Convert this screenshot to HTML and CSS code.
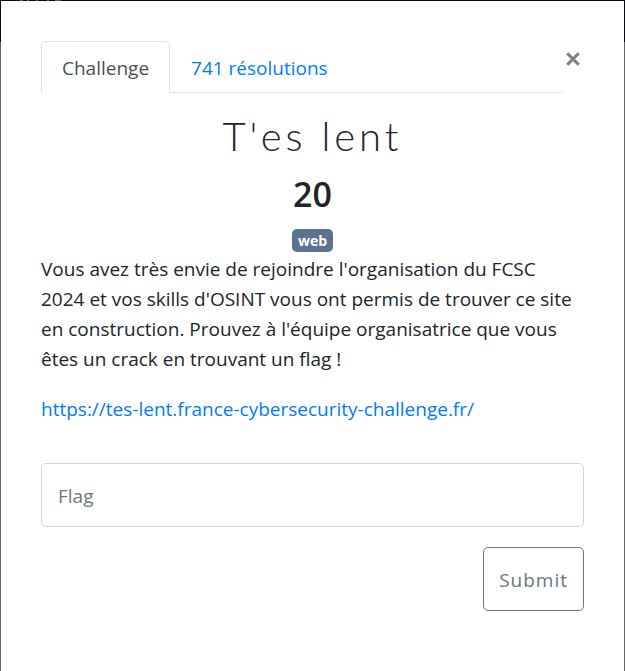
FILE: index.html
```html
<!DOCTYPE html>
<html lang="fr">
<head>
<meta charset="utf-8">
<meta name="viewport" content="width=device-width, initial-scale=1">
<title>T'es lent</title>
<link rel="stylesheet" href="styles.css">
</head>
<body>
<main class="modal">
  <header class="modal-top">
    <nav class="tabs">
      <a class="tab active" href="#challenge">Challenge</a>
      <a class="tab" href="#solves">741 résolutions</a>
    </nav>
    <button class="close" type="button" aria-label="Fermer">
      <svg viewBox="0 0 14 14" width="14" height="14" aria-hidden="true"><path d="M1.2 1.2 12.8 12.8M12.8 1.2 1.2 12.8"/></svg>
    </button>
  </header>
  <section id="challenge">
    <h2 class="name">T'es lent</h2>
    <h3 class="value">20</h3>
    <div class="tags"><span class="badge">web</span></div>
    <p>Vous avez très envie de rejoindre l'organisation du FCSC 2024 et vos skills d'OSINT vous ont permis de trouver ce site en construction. Prouvez à l'équipe organisatrice que vous êtes un crack en trouvant un flag !</p>
    <p><a class="link" href="#site">https://tes-lent.france-cybersecurity-challenge.fr/</a></p>
    <form class="answer">
      <input class="flag" type="text" placeholder="Flag" aria-label="Flag">
      <button class="submit" type="button">Submit</button>
    </form>
  </section>
</main>
</body>
</html>
```
FILE: styles.css
```css
* {
  box-sizing: border-box;
}

body {
  margin: 0;
  min-height: 100vh;
  padding: 1px 1px 0;
  display: flex;
  background:
    linear-gradient(90deg, transparent 20px, #666 20px 23px, transparent 23px 27px, #666 27px 29px, transparent 29px 36px, #666 36px 38px, transparent 38px 47px, #666 47px 49px, transparent 49px 55px, #555 55px 61px, transparent 61px) 0 0 / 100% 1px no-repeat,
    linear-gradient(#050816 42px, #666 42px);
  color: #212529;
  font: 19px/30px "Open Sans", "Noto Sans", sans-serif;
}

.modal {
  flex: 1;
  min-width: 0;
  padding: 40px;
  background: #fff;
}

.modal-top {
  display: flex;
  align-items: flex-start;
}

.tabs {
  flex: 1;
  display: flex;
  border-bottom: 1px solid #dee2e6;
}

.tab {
  margin-bottom: -1px;
  padding: 11px 20px 9px;
  border: 1px solid transparent;
  border-radius: 5px 5px 0 0;
  color: #007bff;
  text-decoration: none;
}

.tab.active {
  border-color: #dee2e6 #dee2e6 #fff;
  background: #fff;
  color: #495057;
}

.close {
  padding: 11px 4px 11px 3px;
  border: 0;
  background: none;
  line-height: 0;
}

.close path {
  fill: none;
  stroke: #7f7f7f;
  stroke-width: 3;
}

.name,
.value {
  margin: 0;
  text-align: center;
}

.name {
  padding-top: 20px;
  font: 300 40px/46px Lato, sans-serif;
  letter-spacing: 4px;
}

.value {
  padding: 15px 0;
  font-size: 34px;
  font-weight: 600;
  line-height: 40px;
}

.tags {
  display: flex;
  justify-content: center;
  padding-bottom: 2px;
}

.badge {
  padding: 0 6px;
  border-radius: 5px;
  background: #5b7290;
  color: #fff;
  font-size: 14px;
  font-weight: 700;
  line-height: 23px;
}

p {
  margin: 0 0 20px;
}

.link {
  color: #007bff;
  text-decoration: none;
}

.answer {
  display: flex;
  flex-direction: column;
  align-items: flex-end;
  gap: 20px;
  padding-top: 19px;
}

.flag,
.submit {
  height: 64px;
  border: 1px solid #ced4da;
  border-radius: 5px;
  background: #fff;
  color: #6c757d;
  font: inherit;
}

.flag {
  width: 100%;
  padding: 2px 16px 0;
}

.flag::placeholder {
  color: #6c757d;
  opacity: 1;
}

.submit {
  padding: 2px 15px 0;
  border-color: #6c757d;
  letter-spacing: 1px;
}
```
